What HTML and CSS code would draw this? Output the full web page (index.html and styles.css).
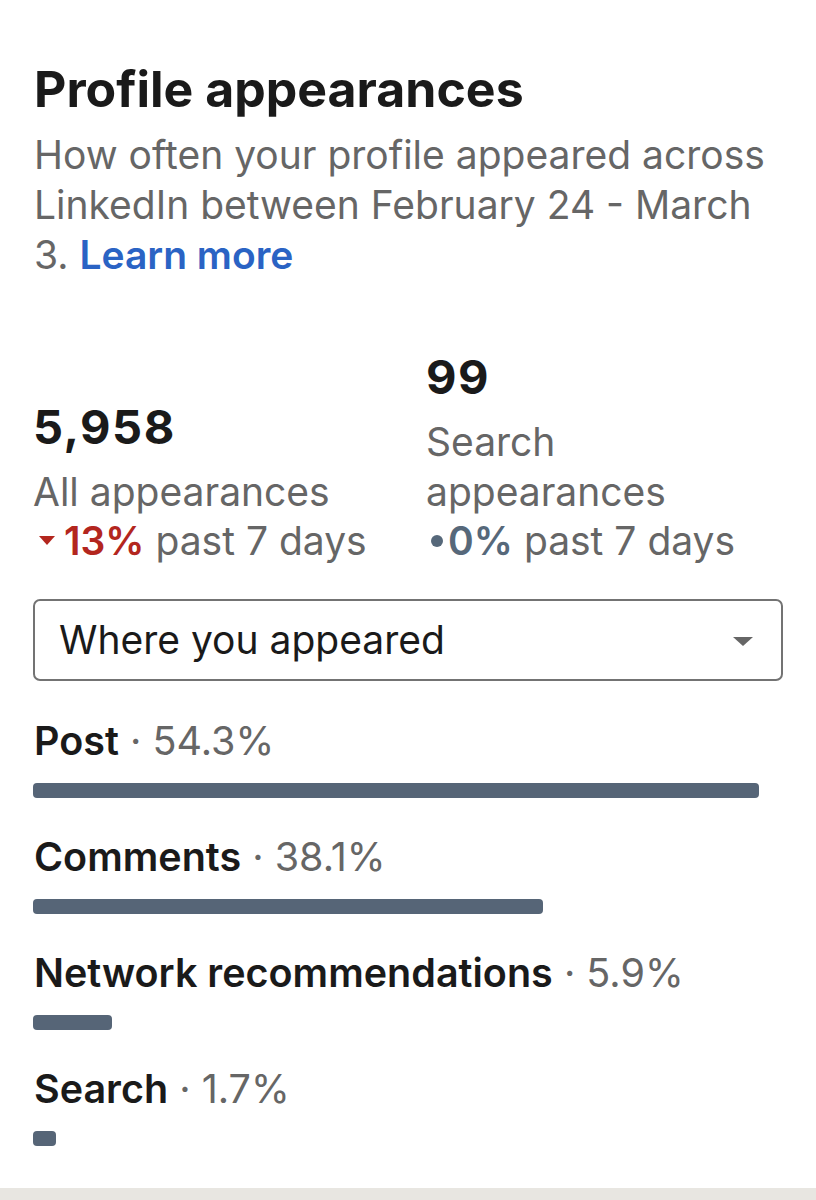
FILE: index.html
```html
<!DOCTYPE html>
<html>
<head>
    <title>Profile appearances</title>
    <link rel="stylesheet" href="styles.css">
</head>
<body>

<section class="card">
    <h1>Profile appearances</h1>
    <p class="intro">How often your profile appeared across LinkedIn between February 24 - March 3. <a href="#">Learn more</a></p>

    <div class="stats">
        <div class="stat">
            <div class="stat-value">5,958</div>
            <div class="stat-label">All appearances</div>
            <div class="stat-change down"><span class="arrow"></span><b>13%</b> past 7 days</div>
        </div>
        <div class="stat">
            <div class="stat-value">99</div>
            <div class="stat-label">Search appearances</div>
            <div class="stat-change flat"><span class="dot"></span><b>0%</b> past 7 days</div>
        </div>
    </div>

    <div class="select">
        <span>Where you appeared</span>
        <span class="caret"></span>
    </div>

    <ul class="sources">
        <li>
            <div class="source-name"><b>Post</b> · 54.3%</div>
            <div class="track"><div class="bar" style="width: 100%"></div></div>
        </li>
        <li>
            <div class="source-name"><b>Comments</b> · 38.1%</div>
            <div class="track"><div class="bar" style="width: 70.2%"></div></div>
        </li>
        <li>
            <div class="source-name"><b>Network recommendations</b> · 5.9%</div>
            <div class="track"><div class="bar" style="width: 10.9%"></div></div>
        </li>
        <li>
            <div class="source-name"><b>Search</b> · 1.7%</div>
            <div class="track"><div class="bar" style="width: 3.1%"></div></div>
        </li>
    </ul>
</section>

<div class="footer-band"></div>

</body>
</html>
```

FILE: styles.css
```css
body, html {
    margin: 0;
    padding: 0;
    background-color: #fff;
    font-family: Inter, "Liberation Sans", sans-serif;
}

.card {
    padding: 61px 33px 0 33px;
    height: 1188px;
    box-sizing: border-box;
}

h1 {
    margin: 0 0 0 1px;
    font-size: 50px;
    line-height: 56px;
    font-weight: 700;
    color: #1a1a1a;
}

.intro {
    margin: 13px 0 0 1px;
    font-size: 39px;
    line-height: 50px;
    color: #666;
}

.intro a {
    color: #2a63c4;
    font-weight: 600;
    text-decoration: none;
}

.stats {
    display: grid;
    grid-template-columns: 393px 1fr;
    align-items: end;
    margin-top: 69px;
}

.stat-value {
    font-size: 47px;
    line-height: 56px;
    font-weight: 700;
    letter-spacing: 1.5px;
    color: #1a1a1a;
    margin-bottom: 12px;
}

.stat-label {
    font-size: 39px;
    line-height: 50px;
    color: #666;
}

.stat-change {
    font-size: 39px;
    line-height: 48px;
    color: #666;
    white-space: nowrap;
}

.stat-change b {
    font-weight: 600;
}

.stat-change.down b {
    color: #b3261e;
}

.stat-change.flat b {
    color: #56687a;
}

/* small red triangle before a drop */
.arrow {
    display: inline-block;
    width: 0;
    height: 0;
    border-left: 8px solid transparent;
    border-right: 8px solid transparent;
    border-top: 9px solid #b3261e;
    vertical-align: middle;
    margin: 0 9px 8px 6px;
}

.dot {
    display: inline-block;
    width: 12px;
    height: 12px;
    border-radius: 50%;
    background-color: #56687a;
    vertical-align: middle;
    margin: 0 5px 7px 5px;
}

.select {
    display: flex;
    align-items: center;
    justify-content: space-between;
    box-sizing: border-box;
    height: 82px;
    margin-top: 34px;
    padding: 0 28px 0 24px;
    border: 2px solid #737373;
    border-radius: 7px;
    font-size: 39px;
    line-height: 48px;
    color: #1a1a1a;
}

.caret {
    width: 0;
    height: 0;
    border-left: 10px solid transparent;
    border-right: 10px solid transparent;
    border-top: 9px solid #666;
    margin-top: 2px;
}

.sources {
    list-style: none;
    margin: 35px 0 0;
    padding: 0;
}

.sources li {
    height: 116px;
}

.source-name {
    margin-left: 1px;
    font-size: 39.5px;
    line-height: 50px;
    color: #666;
}

.source-name b {
    font-weight: 600;
    color: #1a1a1a;
}

.track {
    width: 726px;
    margin-top: 17px;
}

.bar {
    height: 15px;
    border-radius: 4px;
    background-color: #566577;
}

.footer-band {
    height: 12px;
    background-color: #e8e6e1;
}
```
